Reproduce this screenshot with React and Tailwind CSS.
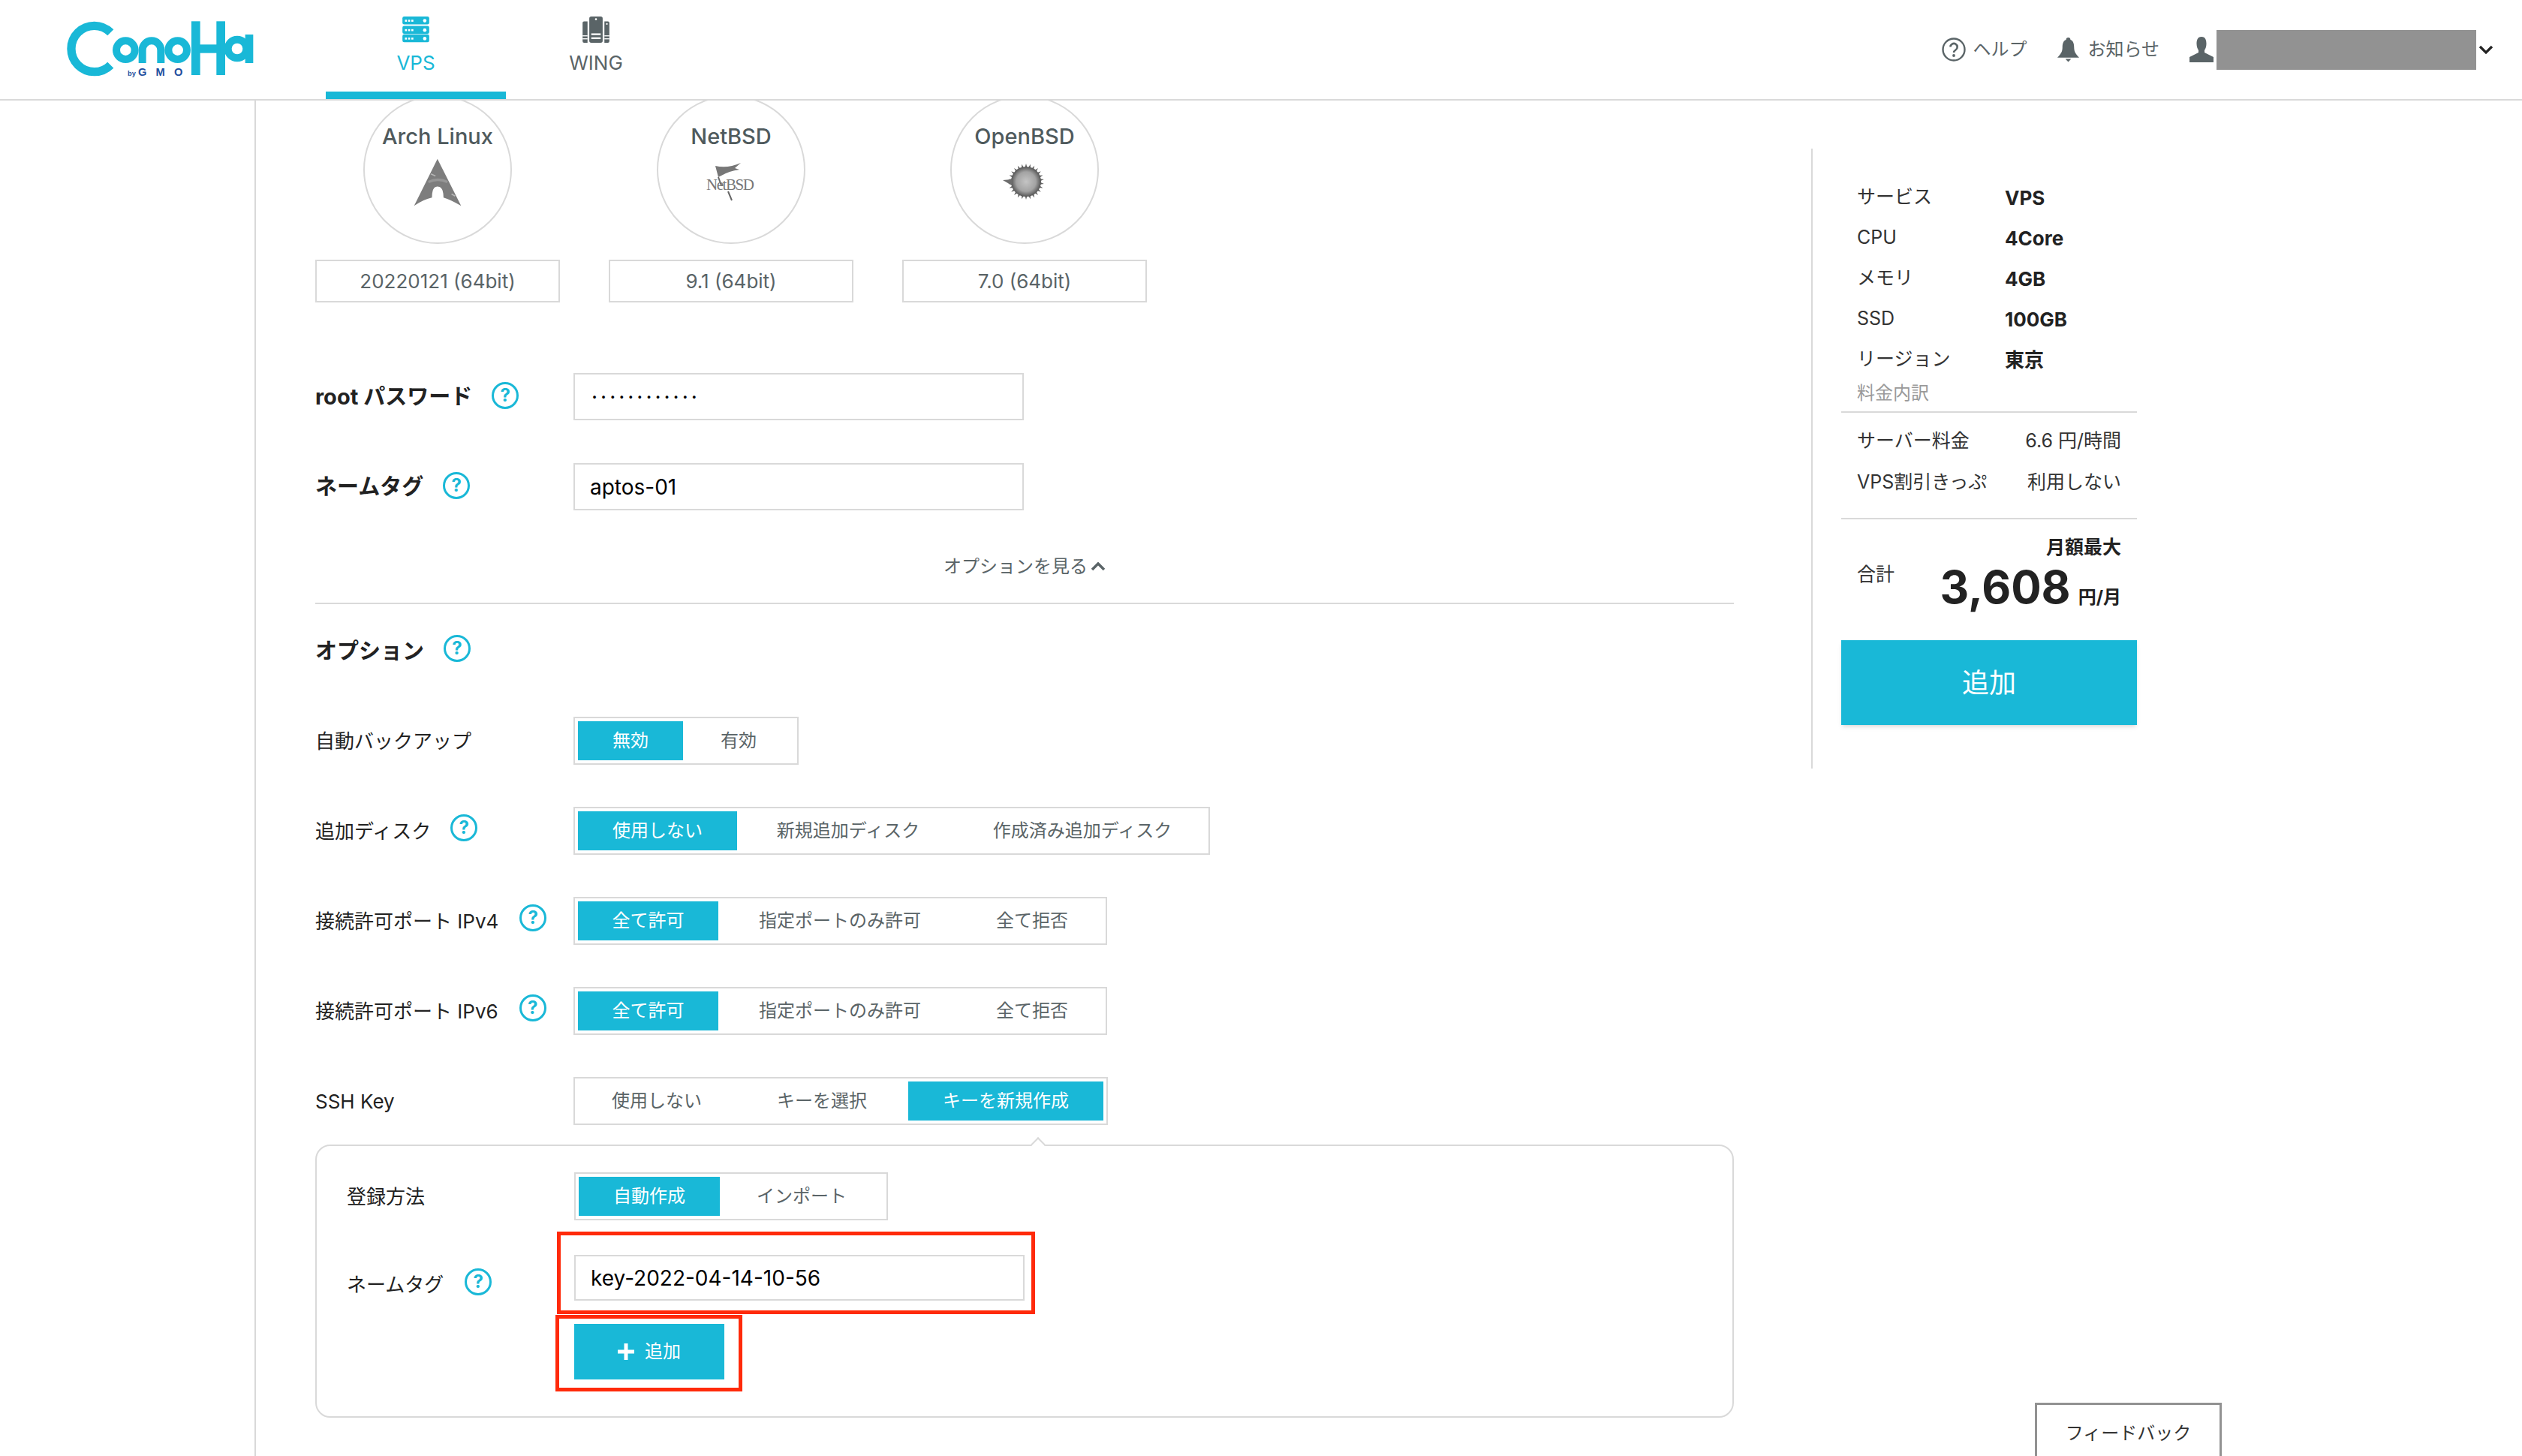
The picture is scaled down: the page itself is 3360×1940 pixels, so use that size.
const SPIKES = Array.from({ length: 26 }, (_, i) => (i * 360) / 26)

function ConohaLogo() {
  return (
    <svg viewBox="0 0 900 330" className="w-[300px] h-[110px] shrink-0">
      <g fill="none" stroke="#19b8d7">
        <path d="M262 100 A92 92 0 1 0 262 230" strokeWidth="34" />
        <circle cx="322" cy="170" r="37" strokeWidth="30" />
        <path d="M389 222 V170 A37 37 0 0 1 463 170 V222" strokeWidth="30" />
        <circle cx="530" cy="170" r="37" strokeWidth="30" />
        <circle cx="768" cy="165" r="37" strokeWidth="30" />
      </g>
      <g fill="#19b8d7">
        <rect x="585" y="55" width="35" height="215" />
        <rect x="685" y="55" width="35" height="215" />
        <rect x="610" y="148" width="90" height="34" />
        <rect x="800" y="108" width="32" height="114" />
      </g>
      <text x="330" y="272" fontFamily="Liberation Sans, sans-serif" fontWeight="700" fontSize="28" fill="#1f4fa0">by</text>
      <text x="372" y="272" fontFamily="Liberation Sans, sans-serif" fontWeight="700" fontSize="44" fill="#1f4fa0" textLength="178">GMO</text>
    </svg>
  )
}

function ServerIcon() {
  return (
    <svg viewBox="0 0 108 106" className="w-9 h-[35px]" fill="#19b8d7">
      {[0, 38, 72].map((y) => (
        <g key={y}>
          <rect x="0" y={y} width="108" height="32" rx="7" />
          <rect x="10" y={y + 13} width="8" height="8" fill="#fff" />
          <rect x="23" y={y + 13} width="8" height="8" fill="#fff" />
          <rect x="36" y={y + 13} width="8" height="8" fill="#fff" />
          <circle cx="90" cy={y + 17} r="7" fill="#fff" />
        </g>
      ))}
    </svg>
  )
}

function WingIcon() {
  return (
    <svg viewBox="0 0 108 106" className="w-9 h-[35px]" fill="#5a6467">
      <path d="M0 26 a6 6 0 0 1 6 -6 h14 v86 h-14 a6 6 0 0 1 -6 -6 z" />
      <path d="M88 20 h14 a6 6 0 0 1 6 6 v74 a6 6 0 0 1 -6 6 h-14 z" />
      <rect x="27" y="0" width="54" height="106" rx="8" />
      <circle cx="54" cy="11" r="4" fill="#fff" />
      <circle cx="98" cy="30" r="3.5" fill="#fff" />
      <rect x="35" y="68" width="38" height="7" fill="#fff" />
      <rect x="35" y="84" width="38" height="7" fill="#fff" />
      <rect x="0" y="76" width="20" height="4" fill="#fff" />
      <rect x="0" y="88" width="20" height="4" fill="#fff" />
      <rect x="88" y="76" width="20" height="4" fill="#fff" />
      <rect x="88" y="88" width="20" height="4" fill="#fff" />
    </svg>
  )
}

function ArchLogo() {
  return (
    <svg viewBox="150 30 200 200" className="w-[67px] h-[67px]">
      <path d="M248 38 L342 225 Q300 200 272 192 Q272 148 248 148 Q226 148 226 192 Q190 200 155 225 Z" fill="#7d7d7d" />
      <path d="M222 98 L240 106 M304 178 L318 186" stroke="#b5b5b5" strokeWidth="5" />
      <path d="M212 130 Q250 112 288 130" stroke="#969696" strokeWidth="10" fill="none" />
    </svg>
  )
}

function NetbsdLogo() {
  return (
    <svg viewBox="0 0 66 52" className="w-[66px] h-[52px]">
      <path d="M12 5 Q28 9 46 1 L38 8 L44 10 Q30 12 20 18 L16 20 Z" fill="#777" />
      <path d="M16 20 L20 31 M29 39 L34 51" stroke="#666" strokeWidth="2" />
      <text x="0" y="37" fontFamily="Liberation Serif, serif" fontSize="21" fill="#777" textLength="64">NetBSD</text>
    </svg>
  )
}

function OpenbsdLogo() {
  return (
    <svg viewBox="0 0 62 54" className="w-[62px] h-[54px]">
      <defs>
        <radialGradient id="puffy">
          <stop offset="0%" stopColor="#c4c4c4" />
          <stop offset="65%" stopColor="#a3a3a3" />
          <stop offset="100%" stopColor="#565656" />
        </radialGradient>
      </defs>
      {SPIKES.map((a) => (
        <path key={a} d="M33 3 L31 10 L35 10 Z" fill="#5e5e5e" transform={`rotate(${a} 33 27)`} />
      ))}
      <circle cx="33" cy="27" r="20" fill="url(#puffy)" />
      <path d="M2 25 L14 24 L14 32 Z" fill="#6c6c6c" />
    </svg>
  )
}

function Help({ className = '' }) {
  return (
    <span className={`flex items-center justify-center w-9 h-9 rounded-full border-[3px] border-[#19b8d7] text-[#19b8d7] text-[24px] font-bold leading-none shrink-0 ${className}`}>?</span>
  )
}

function Seg({ items, active, className = '' }) {
  return (
    <div className={`flex h-16 border-2 border-[#d9d9d9] p-1 ${className}`}>
      {items.map((it, i) => (
        <div
          key={it.label}
          style={{ width: it.w }}
          className={`flex items-center justify-center text-[24px] ${i === active ? 'bg-[#19b8d7] text-white' : 'text-[#5a6467]'}`}
        >
          {it.label}
        </div>
      ))}
    </div>
  )
}

function OptionRow({ label, help, children, helpGap = 'ml-[26px]' }) {
  return (
    <div className="flex items-center h-16 mb-14">
      <div className="flex items-center w-[344px] text-[26px] text-[#222]">
        <span>{label}</span>
        {help && <Help className={`${helpGap} -mt-2`} />}
      </div>
      {children}
    </div>
  )
}

function OsCard({ name, version, children }) {
  return (
    <div className="flex flex-col items-center w-[326px]">
      <div className="flex flex-col items-center w-[198px] h-[198px] rounded-full border-2 border-[#d9d9d9] pt-[38px]">
        <span className="text-[29px] leading-[30px] font-medium text-[#4f5a5d]">{name}</span>
        <div className="flex items-center justify-center h-[70px] mt-[10px]">{children}</div>
      </div>
      <div className="flex items-center justify-center w-full h-[57px] mt-[21px] border-2 border-[#d9d9d9] text-[26px] text-[#5a6467]">
        {version}
      </div>
    </div>
  )
}

function SpecRow({ label, value }) {
  return (
    <div className="grid grid-cols-[197px_1fr] items-center h-[54px] px-[21px] text-[25px] text-[#333]">
      <span>{label}</span>
      <span className="font-bold text-[#222] text-[26px]">{value}</span>
    </div>
  )
}

function PriceRow({ label, value }) {
  return (
    <div className="flex items-center justify-between h-[55px] px-[21px] text-[25px] text-[#333]">
      <span>{label}</span>
      <span>{value}</span>
    </div>
  )
}

export default function App() {
  return (
    <div className="relative w-[3360px] h-[1940px] overflow-hidden bg-white font-[Inter,'Noto_Sans_CJK_JP',sans-serif] text-[#222]">
      <header className="relative z-10 flex items-start h-[134px] bg-white border-b-2 border-[#d9d9d9]">
        <div className="ml-[60px] mt-[10px]"><ConohaLogo /></div>
        <nav className="flex ml-[74px]">
          <div className="flex flex-col items-center w-[240px] h-[132px] pt-[22px] border-b-[10px] border-[#19b8d7] text-[#19b8d7]">
            <ServerIcon />
            <span className="text-[26px] leading-[30px] mt-3">VPS</span>
          </div>
          <div className="flex flex-col items-center w-[240px] h-[132px] pt-[22px] text-[#5a6467]">
            <WingIcon />
            <span className="text-[26px] leading-[30px] mt-3">WING</span>
          </div>
        </nav>
        <div className="flex items-center ml-auto h-[132px] pr-[38px] text-[24px] text-[#5a6467]">
          <svg viewBox="0 0 32 32" className="w-8 h-8">
            <circle cx="16" cy="16" r="14.5" fill="none" stroke="#5a6467" strokeWidth="2.4" />
            <path d="M11.5 12.5 a4.6 4.6 0 1 1 7 4 c-1.6 1 -2.4 1.8 -2.4 3.6" fill="none" stroke="#5a6467" strokeWidth="2.6" />
            <circle cx="16" cy="24" r="1.9" fill="#5a6467" />
          </svg>
          <span className="ml-[9px]">ヘルプ</span>
          <svg viewBox="0 0 32 34" className="w-[31px] h-[34px] ml-[40px]" fill="#5a6467">
            <circle cx="16" cy="3.5" r="3" />
            <path d="M16 3 C9 3 8 9 8 14 C8 21 5 24 1 28 H31 C27 24 24 21 24 14 C24 9 23 3 16 3 Z" />
            <path d="M12 30 H20 L16 34 Z" />
          </svg>
          <span className="ml-[10px]">お知らせ</span>
          <svg viewBox="0 0 32 34" className="w-8 h-[34px] ml-[40px]" fill="#5a6467">
            <path d="M16 0 C10.5 0 9.5 5 9.5 9.5 C9.5 13.5 11 16.5 12 18 V21 L0 27 V34 H32 V27 L20 21 V18 C21 16.5 22.500 13.5 22.500 9.5 C22.500 5 21.500 0 16 0 Z" />
          </svg>
          <div className="w-[346px] h-[53px] ml-1 bg-[#929292]" />
          <svg viewBox="0 0 20 12" className="w-5 h-3 ml-[3px]" fill="none" stroke="#222" strokeWidth="3.200">
            <path d="M2 2 L10 10 L18 2" />
          </svg>
        </div>
      </header>

      <main className="flex h-[1806px] overflow-hidden">
        <div className="w-[339px] shrink-0" />
        <section className="w-[1971px] shrink-0 border-l-2 border-[#d9d9d9] pl-[79px] h-[2000px]">
          <div className="flex gap-[65px] -mt-[7px]">
            <OsCard name="Arch Linux" version="20220121 (64bit)"><ArchLogo /></OsCard>
            <OsCard name="NetBSD" version="9.1 (64bit)"><NetbsdLogo /></OsCard>
            <OsCard name="OpenBSD" version="7.0 (64bit)"><OpenbsdLogo /></OsCard>
          </div>

          <div className="flex items-center mt-[94px]">
            <div className="flex items-center w-[344px] text-[29px] font-bold">
              <span>root パスワード</span>
              <Help className="ml-[26px] -mt-1" />
            </div>
            <div className="flex items-center w-[600px] h-[63px] border-2 border-[#d9d9d9] pl-[22px] text-[28px] tracking-[4px] text-black">············</div>
          </div>
          <div className="flex items-center mt-[57px]">
            <div className="flex items-center w-[344px] text-[29px] font-bold">
              <span>ネームタグ</span>
              <Help className="ml-[26px] -mt-1" />
            </div>
            <div className="flex items-center w-[600px] h-[63px] border-2 border-[#d9d9d9] pl-[20px] text-[28px] text-black">aptos-01</div>
          </div>

          <div className="flex items-center justify-center gap-1 h-[30px] mt-[60px] text-[24px] text-[#5a6467]">
            <span>オプションを見る</span>
            <svg viewBox="0 0 20 12" className="w-5 h-3" fill="none" stroke="#5a6467" strokeWidth="3.500">
              <path d="M2 10 L10 2 L18 10" />
            </svg>
          </div>
          <div className="h-0.5 mt-[33px] bg-[#d9d9d9]" />

          <div className="flex items-center h-10 mt-[43px] text-[29px] font-bold">
            <span>オプション</span>
            <Help className="ml-[26px] -mt-2" />
          </div>

          <div className="mt-[67px]">
            <OptionRow label="自動バックアップ">
              <Seg active={0} items={[{ label: '無効', w: 140 }, { label: '有効', w: 148 }]} />
            </OptionRow>
            <OptionRow label="追加ディスク" help>
              <Seg active={0} items={[{ label: '使用しない', w: 212 }, { label: '新規追加ディスク', w: 296 }, { label: '作成済み追加ディスク', w: 328 }]} />
            </OptionRow>
            <OptionRow label="接続許可ポート IPv4" help helpGap="ml-[28px]">
              <Seg active={0} items={[{ label: '全て許可', w: 187 }, { label: '指定ポートのみ許可', w: 324 }, { label: '全て拒否', w: 188 }]} />
            </OptionRow>
            <OptionRow label="接続許可ポート IPv6" help helpGap="ml-[28px]">
              <Seg active={0} items={[{ label: '全て許可', w: 187 }, { label: '指定ポートのみ許可', w: 324 }, { label: '全て拒否', w: 188 }]} />
            </OptionRow>
            <div className="flex items-center h-16">
              <div className="w-[344px] text-[26px]">SSH Key</div>
              <Seg active={2} items={[{ label: '使用しない', w: 210 }, { label: 'キーを選択', w: 230 }, { label: 'キーを新規作成', w: 260 }]} />
            </div>
          </div>

          <div className="relative h-[364px] mt-[26px] border-2 border-[#d9d9d9] rounded-[20px] pt-[35px] pl-10 bg-white">
            <span className="absolute left-[954px] -top-[9px] w-[14px] h-[14px] rotate-45 bg-white border-l-2 border-t-2 border-[#d9d9d9]" />
            <div className="flex items-center h-16">
              <div className="w-[303px] text-[26px]">登録方法</div>
              <Seg active={0} items={[{ label: '自動作成', w: 188 }, { label: 'インポート', w: 218 }]} />
            </div>
            <div className="flex mt-[15px]">
              <div className="flex items-center w-[280px] h-[110px] pt-[30px] text-[26px]">
                <span>ネームタグ</span>
                <Help className="ml-[28px] -mt-[6px]" />
              </div>
              <div className="w-[637px] h-[110px] border-[5px] border-[#ff2a0a] pl-[18px] pt-[26px]">
                <div className="flex items-center w-[600px] h-[61px] border-2 border-[#d9d9d9] pl-[20px] text-[28px] text-black">key-2022-04-14-10-56</div>
              </div>
            </div>
            <div className="ml-[278px] mt-px w-[249px] h-[102px] border-[5px] border-[#ff2a0a] pl-5 pt-[7px]">
              <div className="flex items-center justify-center gap-[14px] w-[200px] h-[74px] bg-[#19b8d7] text-white text-[24px]">
                <svg viewBox="0 0 22 22" className="w-[22px] h-[22px]" fill="#fff">
                  <path d="M8.500 0 H13.500 V8.500 H22 V13.500 H13.500 V22 H8.500 V13.500 H0 V8.500 H8.500 Z" />
                </svg>
                <span>追加</span>
              </div>
            </div>
          </div>
        </section>

        <aside className="w-[434px] h-[826px] mt-16 ml-[103px] shrink-0 border-l-2 border-[#d9d9d9] pl-[38px] pt-[38px]">
          <SpecRow label="サービス" value="VPS" />
          <SpecRow label="CPU" value="4Core" />
          <SpecRow label="メモリ" value="4GB" />
          <SpecRow label="SSD" value="100GB" />
          <SpecRow label="リージョン" value="東京" />
          <div className="h-[44px] pt-[5px] px-[21px] text-[24px] leading-[26px] text-[#9a9a9a] border-b-2 border-[#d9d9d9]">料金内訳</div>
          <div className="pt-[10px] pb-[20px] border-b-2 border-[#d9d9d9]">
            <PriceRow label="サーバー料金" value="6.6 円/時間" />
            <PriceRow label="VPS割引きっぷ" value="利用しない" />
          </div>
          <div className="flex justify-between h-[161px] px-[21px]">
            <span className="mt-[60px] text-[25px] leading-[26px] text-[#333]">合計</span>
            <div className="flex flex-col items-end pt-[22px]">
              <span className="text-[25px] leading-[30px] font-bold">月額最大</span>
              <div className="flex items-baseline gap-[10px] mt-[2px]">
                <span className="text-[60px] leading-[72px] font-bold">3,608</span>
                <span className="text-[24px] font-bold">円/月</span>
              </div>
            </div>
          </div>
          <div className="flex items-center justify-center h-[113px] bg-[#19b8d7] text-white text-[36px] shadow-md">追加</div>
        </aside>
      </main>

      <div className="absolute left-[2711px] top-[1869px] flex items-start justify-center w-[249px] h-[71px] pt-[20px] bg-white border-[3px] border-b-0 border-[#929292] text-[24px] text-[#333]">
        フィードバック
      </div>
    </div>
  )
}
